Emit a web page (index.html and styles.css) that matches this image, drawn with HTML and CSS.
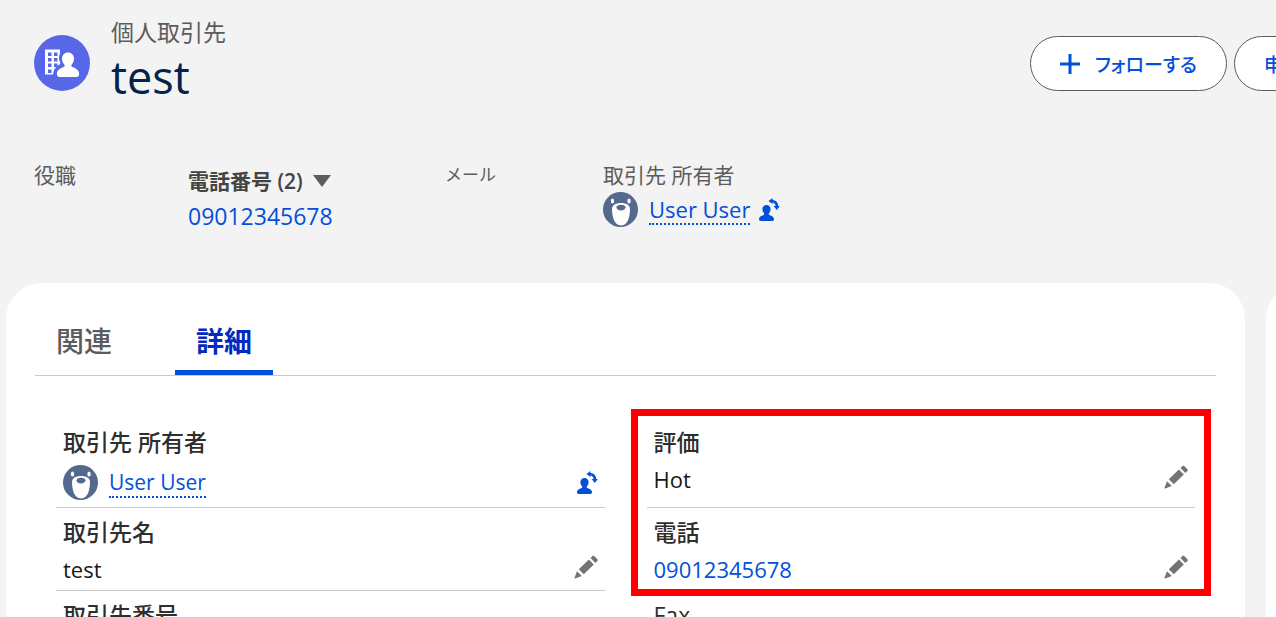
FILE: index.html
```html
<!DOCTYPE html>
<html lang="ja">

<head>
    <meta charset="UTF-8">
    <meta name="viewport" content="width=device-width, initial-scale=1.0">
    <title>test | 個人取引先</title>
    <link rel="stylesheet" href="styles.css">
</head>

<body>
    <!-- shared icons -->
    <svg class="defs" aria-hidden="true">
        <symbol id="bear" viewBox="0 0 35 35">
            <circle cx="17.5" cy="17.5" r="17.5" fill="#54698d"/>
            <ellipse cx="9.500" cy="9" rx="1.700" ry="2.500" fill="#fff"/>
            <ellipse cx="26" cy="9" rx="1.700" ry="2.500" fill="#fff"/>
            <path d="M9 17c0-4 4-6 9-6s9 2 9 6c0 6-1.500 16.500-9 16.500S9 23 9 17z" fill="#fff"/>
            <path d="M13.500 15.300c0-1.700 2-2.600 4.500-2.600s4.500.9 4.500 2.600-2 3.200-4.500 3.200-4.500-1.500-4.500-3.200z" fill="#54698d"/>
        </symbol>
        <symbol id="change-owner" viewBox="0 0 22 24">
            <path d="M8.500 7c2.500 0 4.100 1.900 4.100 4.300 0 1.500-.6 2.900-1.600 3.900-.5.600-.4 1.500.4 1.900 2.400 1 4.600 1.900 4.600 4v.5c0 .9-.7 1.400-1.600 1.400H2.600c-.9 0-1.600-.5-1.600-1.400v-.5c0-2.100 2.200-3 4.600-4 .8-.4.9-1.300.4-1.900-1-1-1.600-2.400-1.600-3.900C4.400 8.900 6 7 8.500 7z" fill="currentColor"/>
            <path d="M13 3c4 0 6 2.500 6 6" fill="none" stroke="currentColor" stroke-width="2.600"/>
            <path d="M10.500 3l4-3v6zM15.600 8h6.200l-3 4z" fill="currentColor"/>
        </symbol>
        <symbol id="pencil" viewBox="0 0 24 24">
            <path d="M4.800 14.200L14.900 4.500l4.900 4.900L9.800 19.200zM16.500 3l2-2c.5-.5 1.200-.5 1.700 0l3.200 3.200c.5.500.5 1.200 0 1.700l-2 2zM3 16.200l4.800 4.800L1.300 23.500c-.6.200-1-.2-.8-.8z" fill="currentColor"/>
        </symbol>
    </svg>

    <header class="page-header">
        <svg class="record-icon" viewBox="0 0 56 56" aria-hidden="true">
            <circle cx="28" cy="28" r="28" fill="#5867e8"/>
            <path d="M11 14.500h15v4c-2.500 4 0 8 .5 10.500-3 1.500-6.500 3.500-7.500 10.500h-8z" fill="#fff"/>
            <path d="M14 17.500h3.500v3.500H14zM20 17.500h3.500v3.500H20zM14 23h3.500v3.500H14zM20 23h3.500v3.500H20zM14 28.500h3.500V32H14zM20 28.500h3.500V32H20zM14 34.500h3.500V38H14z" fill="#5867e8"/>
            <path d="M34 17.500c3.600 0 6 2.700 6 6.200 0 2.200-.8 4.200-2.300 5.700-.6.800-.5 2 .6 2.600 3.500 1.500 6.700 2.800 6.700 6.300v1.200c0 1.500-1 2.500-2.500 2.500h-17C24 42 23 41 23 39.500v-1.200c0-3.500 3.200-4.800 6.700-6.300 1.100-.6 1.200-1.800.6-2.600-1.500-1.500-2.300-3.500-2.300-5.700 0-3.500 2.400-6.200 6-6.200z" fill="#fff"/>
        </svg>
        <div class="heading">
            <p class="object-name">個人取引先</p>
            <h1>test</h1>
        </div>
        <div class="actions">
            <button type="button" class="btn">
                <svg class="plus" viewBox="0 0 20 20" aria-hidden="true"><path d="M10 0v20M0 10h20" stroke="currentColor" stroke-width="3"/></svg>
                フォローする
            </button>
            <button type="button" class="btn">申</button>
        </div>
    </header>

    <dl class="highlights">
        <div>
            <dt>役職</dt>
        </div>
        <div class="phone">
            <dt>電話番号 (2) <svg class="caret" viewBox="0 0 18 12" aria-hidden="true"><path d="M0 0h18l-9 12z" fill="currentColor"/></svg></dt>
            <dd><a href="#">09012345678</a></dd>
        </div>
        <div>
            <dt class="kana">メール</dt>
        </div>
        <div>
            <dt>取引先 所有者</dt>
            <dd class="owner">
                <svg class="avatar" aria-hidden="true"><use href="#bear"/></svg>
                <a href="#" class="user">User User</a>
                <button type="button" class="icon-btn owner-btn" aria-label="所有者の変更"><svg><use href="#change-owner"/></svg></button>
            </dd>
        </div>
    </dl>

    <div class="columns">
        <main class="card">
            <nav class="tabs">
                <a href="#">関連</a>
                <a href="#" class="active">詳細</a>
            </nav>
            <dl class="details">
                <div class="field">
                    <dt>取引先 所有者</dt>
                    <dd class="owner">
                        <svg class="avatar" aria-hidden="true"><use href="#bear"/></svg>
                        <a href="#" class="user">User User</a>
                        <button type="button" class="icon-btn owner-btn" aria-label="所有者の変更"><svg><use href="#change-owner"/></svg></button>
                    </dd>
                </div>
                <div class="field">
                    <dt>評価</dt>
                    <dd>Hot <button type="button" class="icon-btn edit-btn" aria-label="評価の編集"><svg><use href="#pencil"/></svg></button></dd>
                </div>
                <div class="field">
                    <dt>取引先名</dt>
                    <dd>test <button type="button" class="icon-btn edit-btn" aria-label="取引先名の編集"><svg><use href="#pencil"/></svg></button></dd>
                </div>
                <div class="field">
                    <dt>電話</dt>
                    <dd><a href="#">09012345678</a> <button type="button" class="icon-btn edit-btn" aria-label="電話の編集"><svg><use href="#pencil"/></svg></button></dd>
                </div>
                <div class="field">
                    <dt>取引先番号</dt>
                </div>
                <div class="field">
                    <dt>Fax</dt>
                </div>
                <div class="marker"></div>
            </dl>
        </main>
        <aside class="card"></aside>
    </div>
</body>

</html>
```
FILE: styles.css
```css
*{
    margin: 0;
    padding: 0;
    box-sizing: border-box;
}
body{
    height: 100vh;
    overflow: hidden;
    background: #f3f3f3;
    color: #181818;
    font-family: "Open Sans", "Noto Sans CJK JP", sans-serif;
    font-size: 22px;
    line-height: 28px;
}
a{
    color: #0250d9;
    text-decoration: none;
}
svg{
    display: block;
    flex: none;
}
.defs{
    position: absolute;
    width: 0;
    height: 0;
}

/* header */
.page-header{
    display: flex;
    align-items: flex-start;
    padding: 17px 0 0 34px;
}
.record-icon{
    width: 56px;
    height: 56px;
    margin: 18px 21px 0 0;
}
.object-name{
    font-size: 23px;
    line-height: 30px;
    color: #5c5c5c;
}
h1{
    font-size: 45px;
    line-height: 60px;
    font-weight: 400;
    color: #03234d;
}
.actions{
    display: flex;
    flex: none;
    gap: 7px;
    margin: 19px -37px 0 auto;
}
.btn{
    display: flex;
    align-items: center;
    gap: 15px;
    height: 55px;
    padding: 0 29px;
    border: 1px solid #5c5c5c;
    border-radius: 28px;
    background: #fff;
    color: #0250d9;
    font: 500 19px "Noto Sans CJK JP", sans-serif;
    font-feature-settings: "palt";
    white-space: nowrap;
}
.plus{
    width: 20px;
    height: 20px;
}

/* highlights */
.highlights{
    display: grid;
    grid-template-columns: 154px 257px 158px 1fr;
    padding: 53px 0 52px 34px;
}
.highlights dt{
    font-size: 21px;
    line-height: 30px;
    color: #5c5c5c;
}
.highlights dd{
    font-size: 23px;
}
.highlights .kana{
    font-size: 17px;
}
.phone dt{
    display: flex;
    align-items: center;
    gap: 10px;
    padding-top: 6px;
    font-weight: 600;
}
.highlights .phone dt{
    color: #444;
}
.phone dd{
    padding-top: 5px;
    line-height: 30px;
}
.caret{
    width: 18px;
    height: 12px;
    color: #5c5c5c;
}
.owner{
    display: flex;
    align-items: center;
}
.highlights .owner{
    padding-top: 2px;
    font-size: 22px;
}
.avatar{
    width: 35px;
    height: 35px;
    margin-right: 11px;
}
.user{
    border-bottom: 2px dotted #0250d9;
}
.icon-btn{
    border: 0;
    background: none;
}
.owner-btn{
    margin-left: 8px;
    color: #0250d9;
}
.owner-btn svg{
    width: 22px;
    height: 24px;
}

/* cards */
.columns{
    display: grid;
    grid-template-columns: minmax(0, 1fr) 80px;
    gap: 21px;
    margin: 0 -70px 0 6px;
}
.card{
    padding: 29px 29px 60px;
    border-radius: 36px;
    background: #fff;
}
aside.card{
    padding: 0;
}
.tabs{
    display: flex;
    gap: 42px;
    border-bottom: 1px solid #c9c9c9;
}
.tabs a{
    padding: 0 21px;
    border-bottom: 5px solid transparent;
    color: #5c5c5c;
    font-size: 28px;
    font-weight: 500;
    line-height: 58px;
}
.tabs .active{
    border-color: #0250d9;
    color: #022ac0;
    font-weight: 700;
}
.details{
    display: grid;
    grid-template-columns: 1fr 1fr;
    column-gap: 42px;
    position: relative;
    padding: 42px 21px 0;
}
.field{
    padding: 9px 7px 7px;
    border-bottom: 1px solid #c9c9c9;
}
.field dt{
    margin-bottom: 8px;
    color: #2e2e2e;
    font-size: 23px;
    font-weight: 500;
    line-height: 30px;
}
.field dd{
    display: flex;
    align-items: center;
}
.field .owner{
    font-size: 21px;
}
.field .icon-btn{
    margin-left: auto;
}
.edit-btn{
    align-self: flex-start;
    color: #747474;
}
.edit-btn svg{
    width: 24px;
    height: 24px;
}
/* red frame over the two fields on the right */
.marker{
    position: absolute;
    grid-area: 1 / 2 / 3 / 3;
    inset: -9px -16px -5px;
    border: 7px solid #f00;
    pointer-events: none;
}
```
